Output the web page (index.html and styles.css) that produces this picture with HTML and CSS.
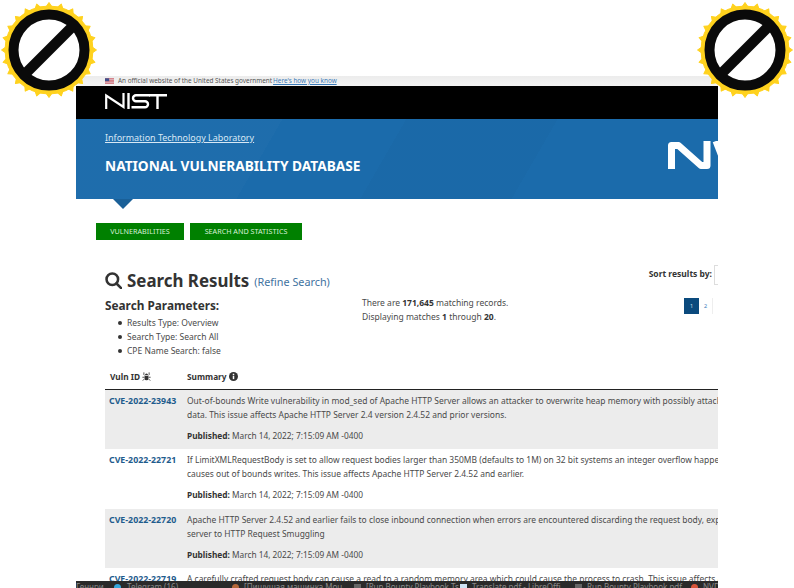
FILE: index.html
```html
<!DOCTYPE html>
<html lang="en">
<head>
<meta charset="utf-8">
<title>NVD - Search Results</title>
<link rel="stylesheet" href="styles.css">
</head>
<body>
<div class="page">
  <div class="gov">
    <svg class="flag" viewBox="0 0 10 6" width="9" height="6"><rect width="10" height="6" fill="#e9e9ef"/><path d="M0 .5h10M0 2.2h10M0 3.9h10M0 5.5h10" stroke="#c8414b" stroke-width=".9"/><rect width="4.600" height="3.200" fill="#3f4f8c"/></svg>
    <span>An official website of the United States government</span> <a class="gov-link">Here's how you know</a>
  </div>
  <div class="black">
    <svg class="nist" viewBox="0 0 62 16" width="62" height="16" fill="none" stroke="#fff" stroke-width="2.400">
      <path d="M1.200 16V2.500L18.500 14V0" stroke-width="2.200"/>
      <path d="M23.500 0V16"/>
      <path d="M45 2.200H31a3 3 0 0 0 0 6H40a3 3 0 0 1 0 6H26.500"/>
      <path d="M44 2.200H62M52.500 2.200V16"/>
    </svg>
  </div>
  <div class="blue">
    <div class="blue-text">
      <a class="itl">Information Technology Laboratory</a>
      <div class="nvd">NATIONAL VULNERABILITY DATABASE</div>
    </div>
    <svg class="mark" viewBox="0 0 51 28" width="51" height="28" fill="none" stroke="#fff" stroke-width="7" stroke-linejoin="round">
      <path d="M4.500 28V4.500H11.500L34 24.500H40V0"/>
      <path d="M49 0L60 28"/>
    </svg>
  </div>
  <div class="caret"></div>
  <nav class="nav">
    <a class="btn btn-a">VULNERABILITIES</a>
    <a class="btn btn-b">SEARCH AND STATISTICS</a>
  </nav>
  <div class="main">
    <div class="title-row">
      <h1 class="title">
        <svg class="mag" viewBox="0 0 20 20" width="17" height="17" fill="none" stroke="#333" stroke-width="3"><circle cx="8.600" cy="8.600" r="6.800"/><path d="M13.500 13.500L19 19" stroke-linecap="round"/></svg>
        <span>Search Results</span> <a class="refine">(Refine Search)</a>
      </h1>
      <div class="sort"><b>Sort results by:</b><span class="select"></span></div>
    </div>
    <div class="info-row">
      <div class="params">
        <h2>Search Parameters:</h2>
        <ul>
          <li>Results Type: Overview</li>
          <li>Search Type: Search All</li>
          <li>CPE Name Search: false</li>
        </ul>
      </div>
      <div class="counts">
        <p>There are <b>171,645</b> matching records.</p>
        <p>Displaying matches <b>1</b> through <b>20</b>.</p>
      </div>
      <div class="pager"><span class="cur">1</span><span class="pg">2</span><span class="pg"></span></div>
    </div>
    <div class="thead">
      <div class="c1">Vuln ID <svg viewBox="0 0 12 12" width="9" height="9" fill="#333"><path d="M3.500 5h5v3.500a2.500 2.500 0 0 1-5 0z"/><path d="M4 4a2 2 0 0 1 4 0z"/><path d="M2.500 0.500v3l1 1M9.500 0.500v3l-1 1M0.500 7h3M8.500 7h3M1 11.500l2.500-2.500M11 11.500L8.500 9" stroke="#333" stroke-width="1.100" fill="none"/></svg></div>
      <div class="c2">Summary <svg viewBox="0 0 12 12" width="9" height="9"><circle cx="6" cy="6" r="6" fill="#333"/><rect x="5" y="5" width="2" height="4.500" fill="#fff"/><rect x="5" y="2.300" width="2" height="1.800" fill="#fff"/></svg></div>
    </div>
    <div class="row shade">
      <a class="cve">CVE-2022-23943</a>
      <div class="sum">
        <p>Out-of-bounds Write vulnerability in mod_sed of Apache HTTP Server allows an attacker to overwrite heap memory with possibly attacker provided<br>data. This issue affects Apache HTTP Server 2.4 version 2.4.52 and prior versions.</p>
        <p class="pub"><b>Published:</b> March 14, 2022; 7:15:09 AM -0400</p>
      </div>
    </div>
    <div class="row">
      <a class="cve">CVE-2022-22721</a>
      <div class="sum">
        <p>If LimitXMLRequestBody is set to allow request bodies larger than 350MB (defaults to 1M) on 32 bit systems an integer overflow happens which later<br>causes out of bounds writes. This issue affects Apache HTTP Server 2.4.52 and earlier.</p>
        <p class="pub"><b>Published:</b> March 14, 2022; 7:15:09 AM -0400</p>
      </div>
    </div>
    <div class="row shade">
      <a class="cve">CVE-2022-22720</a>
      <div class="sum">
        <p>Apache HTTP Server 2.4.52 and earlier fails to close inbound connection when errors are encountered discarding the request body, exposing the<br>server to HTTP Request Smuggling</p>
        <p class="pub"><b>Published:</b> March 14, 2022; 7:15:09 AM -0400</p>
      </div>
    </div>
    <div class="row">
      <a class="cve">CVE-2022-22719</a>
      <div class="sum">
        <p>A carefully crafted request body can cause a read to a random memory area which could cause the process to crash. This issue affects Apache</p>
      </div>
    </div>
  </div>
</div>

<div class="taskbar">
  <span class="t0">Геннри</span>
  <span class="t1"><i class="ico ico-tg"></i>Telegram (16)</span>
  <span class="t2"><i class="ico ico-or"></i>[Пишущая машинка Mou</span>
  <span class="t3"><i class="ico ico-gr"></i>[Run Bounty Playbook Ts</span>
  <span class="t4"><i class="ico ico-doc"></i>Translate.pdf - LibreOffi</span>
  <span class="t5"><i class="ico ico-gr"></i>Run Bounty Playbook.pdf</span>
  <span class="t6"><i class="ico ico-ff"></i>NVD</span>
</div>

<svg class="badge badge-l" viewBox="-50 -50 100 100" width="100" height="100"><use href="#b"/></svg>
<svg class="badge badge-r" viewBox="-50 -50 100 100" width="100" height="100">
  <defs>
    <g id="b">
      <g fill="#ffd21e" stroke="#ffd21e" stroke-width="1" stroke-linejoin="round">
        <circle r="44"/>
        <g id="t"><path d="M-3.800 -42L0 -47.500 3.800 -42z"/></g>
        <use href="#t" transform="rotate(15)"/><use href="#t" transform="rotate(30)"/><use href="#t" transform="rotate(45)"/><use href="#t" transform="rotate(60)"/><use href="#t" transform="rotate(75)"/><use href="#t" transform="rotate(90)"/><use href="#t" transform="rotate(105)"/><use href="#t" transform="rotate(120)"/><use href="#t" transform="rotate(135)"/><use href="#t" transform="rotate(150)"/><use href="#t" transform="rotate(165)"/><use href="#t" transform="rotate(180)"/><use href="#t" transform="rotate(195)"/><use href="#t" transform="rotate(210)"/><use href="#t" transform="rotate(225)"/><use href="#t" transform="rotate(240)"/><use href="#t" transform="rotate(255)"/><use href="#t" transform="rotate(270)"/><use href="#t" transform="rotate(285)"/><use href="#t" transform="rotate(300)"/><use href="#t" transform="rotate(315)"/><use href="#t" transform="rotate(330)"/><use href="#t" transform="rotate(345)"/>
      </g>
      <circle r="35.500" fill="#fff" stroke="#0a0a0a" stroke-width="10"/>
      <path d="M-24 24L24 -24" stroke="#0a0a0a" stroke-width="10.500"/>
    </g>
  </defs>
  <use href="#b"/>
</svg>
</body>
</html>
```
FILE: styles.css
```css
* { box-sizing: border-box; }
html, body { margin: 0; padding: 0; height: 100%; overflow: hidden; background: #fff; }
body { position: relative; font-family: "Noto Sans", sans-serif; color: #4a4a4a; }
a { cursor: pointer; }
.page { width: 642px; height: 512px; margin: 76px 0 0 76px; overflow: hidden; background: #fff; }

.gov { height: 10px; background: linear-gradient(#ececec, #f4f4f4); padding-left: 29px; font-size: 6.400px; line-height: 10px; color: #555; white-space: nowrap; display: flex; align-items: center; gap: 4px; }
.flag { flex: none; }
.gov-link { color: #3a7ab8; text-decoration: underline; margin-left: -3px; }
.black { height: 33px; background: #000; padding: 7px 0 0 29px; }
.nist { display: block; }

.blue { height: 80px; display: flex; justify-content: space-between; padding-left: 29px; overflow: hidden; background-color: #1b6bab;
  background-image: linear-gradient(120deg, rgba(255,255,255,.015) 0 30%, transparent 30% 48%, rgba(0,0,0,.02) 48% 70%, transparent 70%); }
.blue-text { padding-top: 13px; color: #fff; }
.itl { display: block; font-size: 8.950px; line-height: 12px; color: #d8e8f5; text-decoration: underline; white-space: nowrap; }
.nvd { margin-top: 14px; font-size: 13.700px; line-height: 16px; font-weight: 700; white-space: nowrap; }
.mark { flex: none; margin-top: 22px; display: block; }

.caret { width: 0; height: 0; margin-left: 37px; border-left: 10px solid transparent; border-right: 10px solid transparent; border-top: 10px solid #1a6098; }

.nav { display: flex; gap: 6px; margin: 14px 0 0 20px; }
.btn { height: 17px; background: #008000; color: #d7f0d7; font-size: 7.200px; line-height: 17px; text-align: center; white-space: nowrap; }
.btn-a { width: 88px; }
.btn-b { width: 112px; }

.main { padding: 26px 0 0 29px; }
.title-row { display: flex; justify-content: space-between; align-items: flex-start; height: 25px; }
.title { margin: 0; font-size: 16.900px; line-height: 25px; font-weight: 700; color: #333; white-space: nowrap; display: flex; align-items: center; gap: 5px; }
.mag { flex: none; }
.refine { font-size: 10.800px; font-weight: 400; color: #3f72a0; padding-top: 3px; }
.sort { display: flex; align-items: flex-start; gap: 2px; margin-top: -1px; font-size: 8.500px; line-height: 18px; color: #333; }
.sort b { white-space: nowrap; }
.select { display: block; width: 4px; height: 20px; border: 1px solid #ddd; border-right: 0; }

.info-row { display: flex; height: 76px; }
.params { flex: none; width: 257px; padding-top: 7px; }
.params h2 { margin: 0; font-size: 11.800px; line-height: 15px; color: #333; font-weight: 700; white-space: nowrap; }
.params ul { margin: 2.500px 0 0; padding: 0 0 0 13px; list-style: none; font-size: 8.500px; line-height: 14px; }
.params li { display: flex; align-items: center; white-space: nowrap; }
.params li::before { content: ""; flex: none; width: 4px; height: 4px; margin-right: 5px; border-radius: 50%; background: #333; }
.counts { flex: none; width: 322px; padding-top: 5px; font-size: 8.500px; line-height: 14px; }
.counts p { margin: 0; white-space: nowrap; }
.counts b { color: #333; }
.pager { display: flex; align-items: flex-start; margin-top: 7px; flex: none; }
.cur, .pg { display: block; height: 16px; line-height: 16px; font-size: 5.500px; text-align: center; }
.cur { width: 15px; background: #0b4a7d; color: #cfe0ee; }
.pg { width: 14px; color: #3a7ab8; border-right: 1px solid #eee; }
.pg:last-child { border: 0; }

.thead { display: flex; height: 23px; font-size: 8.300px; line-height: 20px; font-weight: 700; color: #333; border-bottom: 1px solid #222; }
.c1 { width: 82px; padding-left: 5px; }
.c2 { flex: 1; }
.thead svg { vertical-align: -1px; }

.row { display: flex; padding: 4px 0 0 4px; height: 59.300px; }
.shade { background: #ececec; }
.cve { flex: none; width: 78px; font-size: 8.800px; line-height: 14px; font-weight: 700; color: #1f5c8d; white-space: nowrap; }
.sum { font-size: 8.450px; line-height: 14px; white-space: nowrap; }
.sum p { margin: 0; }
.sum .pub { margin-top: 7px; font-size: 8.300px; }
.pub b { color: #333; }

.taskbar { position: absolute; left: 76px; top: 581px; width: 642px; height: 7px; background: #2a2a2a; overflow: hidden; font-size: 8px; line-height: 12px; color: #8a8a8a; white-space: nowrap; display: flex; }
.taskbar span { display: block; flex: none; overflow: hidden; }
.t0 { width: 38px; }
.t1 { width: 118px; }
.t2 { width: 122px; }
.t3 { width: 106px; }
.t4 { width: 115px; }
.t5 { width: 115px; }
.t6 { width: 28px; }
.ico { display: inline-block; width: 7px; height: 7px; margin-right: 5px; vertical-align: -1px; }
.ico-tg { border-radius: 50%; background: #35a7de; margin-right: 6px; }
.ico-or { border-radius: 50%; background: #b5673a; }
.ico-gr { background: #666; }
.ico-doc { background: #cfe3f5; }
.ico-ff { border-radius: 50%; background: #d9553a; margin-left: 1px; margin-right: 5px; }

.badge { position: absolute; top: 0; }
.badge-l { left: -1px; }
.badge-r { left: 695px; }
```
